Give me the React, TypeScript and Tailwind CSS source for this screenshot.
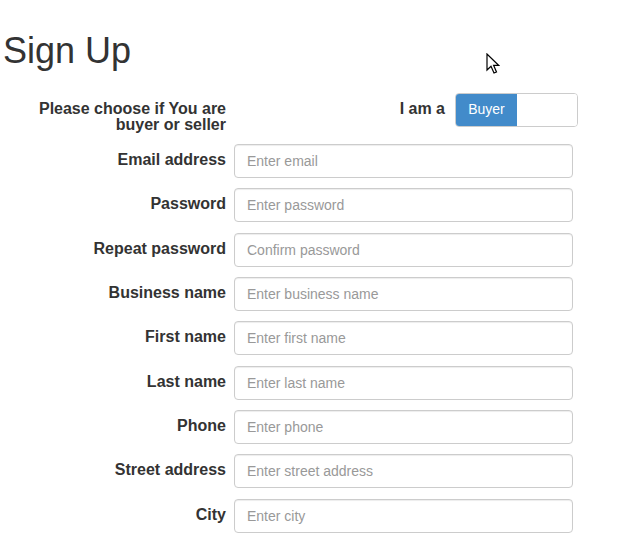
const fields = [
  { label: "Email address", placeholder: "Enter email", type: "email" },
  { label: "Password", placeholder: "Enter password", type: "password" },
  { label: "Repeat password", placeholder: "Confirm password", type: "password" },
  { label: "Business name", placeholder: "Enter business name", type: "text" },
  { label: "First name", placeholder: "Enter first name", type: "text" },
  { label: "Last name", placeholder: "Enter last name", type: "text" },
  { label: "Phone", placeholder: "Enter phone", type: "text" },
  { label: "Street address", placeholder: "Enter street address", type: "text" },
  { label: "City", placeholder: "Enter city", type: "text" },
]

const Cursor = () => (
  <svg
    className="pointer-events-none absolute left-[486px] top-[53px]"
    width="14"
    height="22"
    viewBox="0 0 14 22"
  >
    <path
      d="M1 1 L1 17 L5 13.2 L8 20 L10.5 19 L7.6 12.3 L12.6 12.3 Z"
      fill="#fff"
      stroke="#000"
      strokeWidth="1.2"
      strokeLinejoin="miter"
    />
  </svg>
)

export default function App() {
  return (
    <div className="relative h-[537px] w-[642px] overflow-hidden bg-white font-['Liberation_Sans',Arial,sans-serif] text-[#333]">
      <Cursor />

      <h1 className="mt-[31px] pl-[3px] text-[36px] font-normal leading-[39.6px]">Sign Up</h1>

      <form className="mt-[22.4px] flex flex-col gap-[10.33px]">
        {/* buyer / seller switch */}
        <div className="flex h-[40.67px] items-start">
          <label className="w-[226px] pt-2 text-right text-[16px] font-bold leading-4">
            Please choose if You are buyer or seller
          </label>
          <div className="ml-2 flex w-[344px] items-start justify-end gap-[10px]">
            <span className="pt-2 text-[16px] font-bold leading-4">I am a</span>
            <div className="flex h-[34px] w-[123px] overflow-hidden rounded border border-[#ccc]">
              <span className="flex w-[61px] items-center justify-center bg-[#428bca] text-[14px] text-white">
                Buyer
              </span>
              <span className="flex-1 bg-white" />
            </div>
          </div>
        </div>

        {fields.map((f) => (
          <div key={f.label} className="flex items-start">
            <label className="w-[226px] pt-2 text-right text-[16px] font-bold leading-4">{f.label}</label>
            <input
              type={f.type}
              placeholder={f.placeholder}
              className="ml-2 h-[34px] w-[339px] rounded border border-[#ccc] bg-white px-3 text-[14px] text-[#555] shadow-[inset_0_1px_1px_rgba(0,0,0,0.075)] outline-none placeholder:text-[#999]"
            />
          </div>
        ))}
      </form>
    </div>
  )
}
